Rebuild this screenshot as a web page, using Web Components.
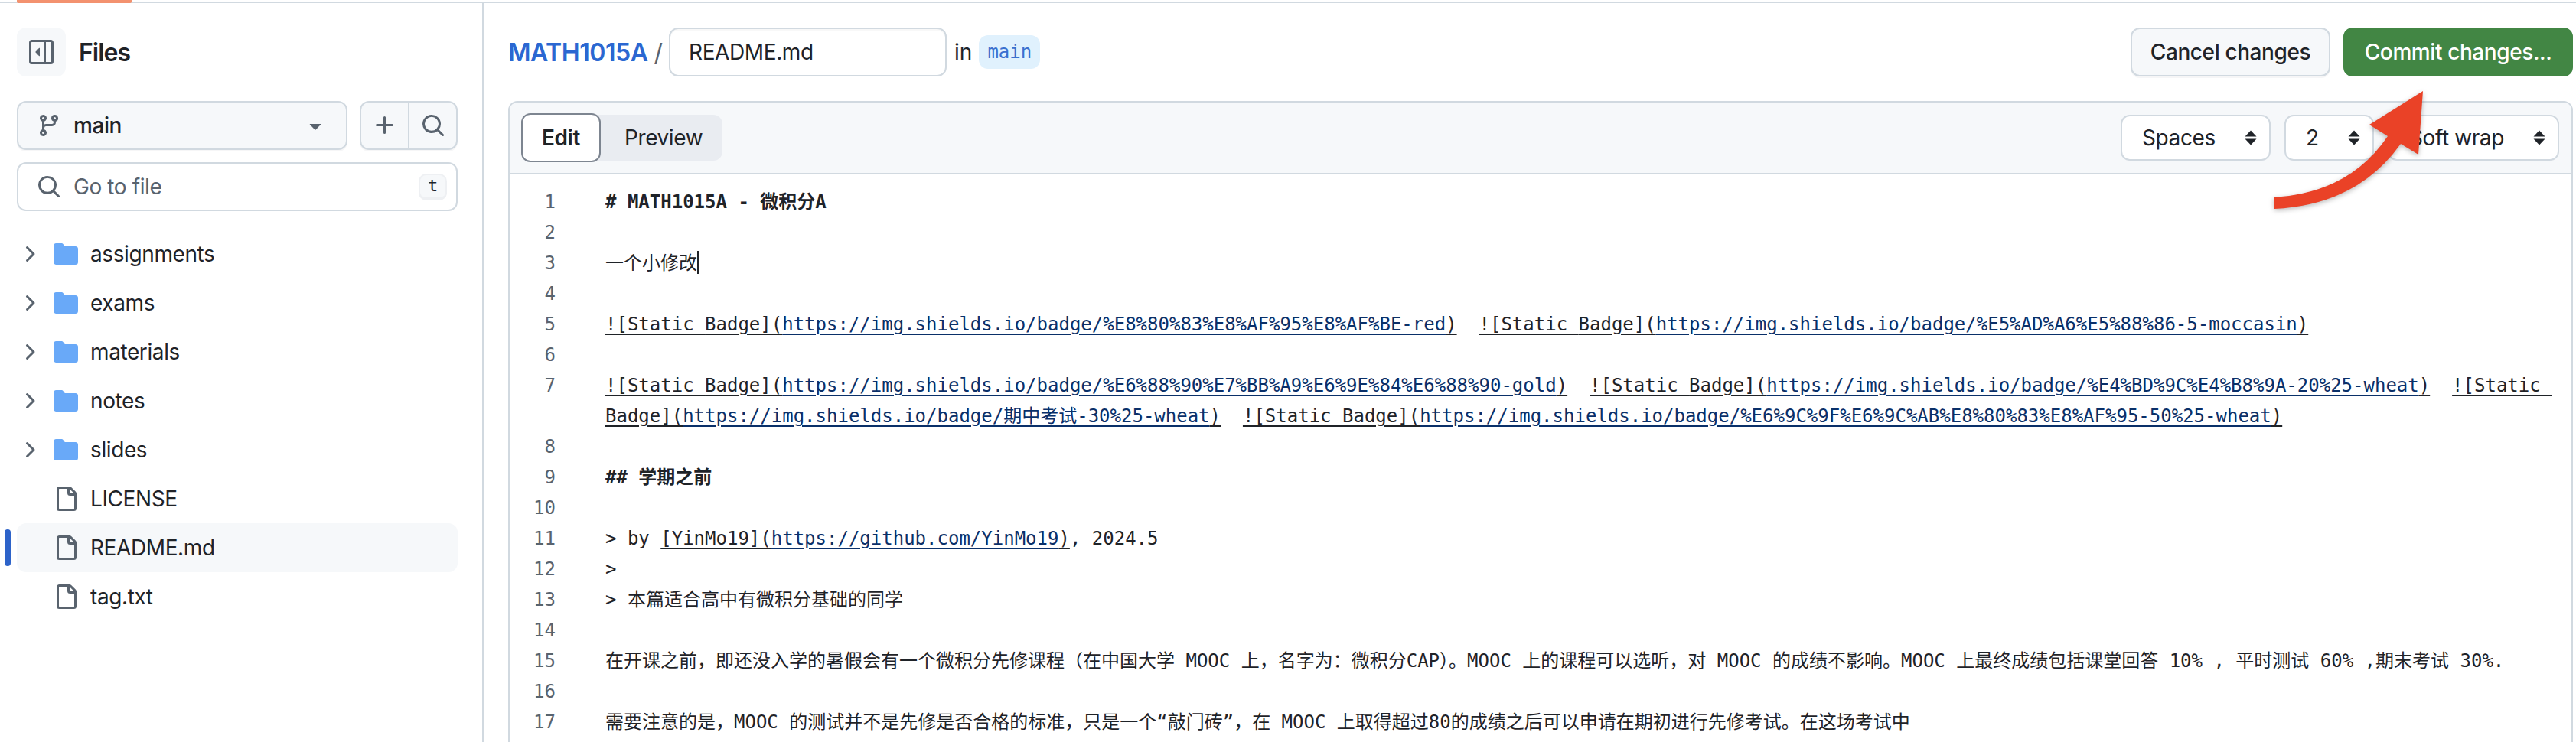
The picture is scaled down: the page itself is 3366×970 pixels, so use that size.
<!DOCTYPE html>
<html lang="en">
<head>
<meta charset="utf-8">
<title>Editing MATH1015A/README.md</title>
<style>
  html, body { margin: 0; padding: 0; background: #fff; }
  body {
    width: 3366px; height: 970px; overflow: hidden;
    font-family: Inter, "Noto Sans", "Noto Sans CJK SC", sans-serif;
    color: #1f2328;
  }
</style>
</head>
<body>
<app-shell>
  <file-sidebar slot="side">
    <tree-item kind="dir">assignments</tree-item>
    <tree-item kind="dir">exams</tree-item>
    <tree-item kind="dir">materials</tree-item>
    <tree-item kind="dir">notes</tree-item>
    <tree-item kind="dir">slides</tree-item>
    <tree-item>LICENSE</tree-item>
    <tree-item current>README.md</tree-item>
    <tree-item>tag.txt</tree-item>
  </file-sidebar>
  <edit-header slot="main"></edit-header>
  <code-editor slot="main">
    <code-line n="1" bold># MATH1015A - 微积分A</code-line>
    <code-line n="2"></code-line>
    <code-line n="3">一个小修改<edit-caret></edit-caret></code-line>
    <code-line n="4"></code-line>
    <code-line n="5"><md-link bang label="Static Badge" url="https://img.shields.io/badge/%E8%80%83%E8%AF%95%E8%AF%BE-red"></md-link>  <md-link bang label="Static Badge" url="https://img.shields.io/badge/%E5%AD%A6%E5%88%86-5-moccasin"></md-link></code-line>
    <code-line n="6"></code-line>
    <code-line n="7"><md-link bang label="Static Badge" url="https://img.shields.io/badge/%E6%88%90%E7%BB%A9%E6%9E%84%E6%88%90-gold"></md-link>  <md-link bang label="Static Badge" url="https://img.shields.io/badge/%E4%BD%9C%E4%B8%9A-20%25-wheat"></md-link>  <md-link bang label="Static Badge" url="https://img.shields.io/badge/期中考试-30%25-wheat"></md-link>  <md-link bang label="Static Badge" url="https://img.shields.io/badge/%E6%9C%9F%E6%9C%AB%E8%80%83%E8%AF%95-50%25-wheat"></md-link></code-line>
    <code-line n="8"></code-line>
    <code-line n="9" bold>## 学期之前</code-line>
    <code-line n="10"></code-line>
    <code-line n="11">&gt; by <md-link label="YinMo19" url="https://github.com/YinMo19"></md-link>, 2024.5</code-line>
    <code-line n="12">&gt;</code-line>
    <code-line n="13">&gt; 本篇适合高中有微积分基础的同学</code-line>
    <code-line n="14"></code-line>
    <code-line n="15">在开课之前，即还没入学的暑假会有一个微积分先修课程（在中国大学 MOOC 上，名字为：微积分CAP）。MOOC 上的课程可以选听，对 MOOC 的成绩不影响。MOOC 上最终成绩包括课堂回答 10% , 平时测试 60% ,期末考试 30%.</code-line>
    <code-line n="16"></code-line>
    <code-line n="17">需要注意的是，MOOC 的测试并不是先修是否合格的标准，只是一个“敲门砖”，在 MOOC 上取得超过80的成绩之后可以申请在期初进行先修考试。在这场考试中</code-line>
  </code-editor>
</app-shell>
<red-arrow></red-arrow>

<script>
const ICONS = {
  sidebar: '<path d="M4.177 7.823a.25.25 0 0 0 0 .354l2.396 2.396A.25.25 0 0 0 7 10.396V5.604a.25.25 0 0 0-.427-.177Z"/><path d="M1.75 0h12.5C15.216 0 16 .784 16 1.75v12.5A1.75 1.75 0 0 1 14.25 16H1.75A1.75 1.75 0 0 1 0 14.25V1.75C0 .784.784 0 1.75 0ZM1.5 1.75v12.5c0 .138.112.25.25.25H9.5v-13H1.75a.25.25 0 0 0-.25.25ZM11 14.5h3.25a.25.25 0 0 0 .25-.25V1.75a.25.25 0 0 0-.25-.25H11Z"/>',
  branch: '<path d="M9.5 3.25a2.25 2.25 0 1 1 3 2.122V6A2.5 2.5 0 0 1 10 8.5H6a1 1 0 0 0-1 1v1.128a2.251 2.251 0 1 1-1.5 0V5.372a2.25 2.25 0 1 1 1.5 0v1.836A2.493 2.493 0 0 1 6 7h4a1 1 0 0 0 1-1v-.628A2.25 2.25 0 0 1 9.5 3.25Zm-6 0a.75.75 0 1 0 1.5 0 .75.75 0 0 0-1.5 0Zm8.25-.75a.75.75 0 1 0 0 1.5.75.75 0 0 0 0-1.5ZM4.25 12a.75.75 0 1 0 0 1.5.75.75 0 0 0 0-1.5Z"/>',
  plus: '<path d="M7.75 2a.75.75 0 0 1 .75.75V7h4.25a.75.75 0 0 1 0 1.5H8.5v4.25a.75.75 0 0 1-1.5 0V8.5H2.75a.75.75 0 0 1 0-1.5H7V2.75A.75.75 0 0 1 7.75 2Z"/>',
  search: '<path d="M10.68 11.74a6 6 0 0 1-7.922-8.982 6 6 0 0 1 8.982 7.922l3.04 3.04a.749.749 0 0 1-.326 1.275.749.749 0 0 1-.734-.215ZM11.5 7a4.499 4.499 0 1 0-8.997 0A4.499 4.499 0 0 0 11.5 7Z"/>',
  chevron: '<path d="M6.22 3.22a.75.75 0 0 1 1.06 0l4.25 4.25a.75.75 0 0 1 0 1.06l-4.25 4.25a.751.751 0 0 1-1.042-.018.751.751 0 0 1-.018-1.042L9.94 8 6.22 4.28a.75.75 0 0 1 0-1.06Z"/>',
  folder: '<path d="M1.75 1A1.75 1.75 0 0 0 0 2.75v10.5C0 14.216.784 15 1.75 15h12.5A1.75 1.75 0 0 0 16 13.25v-8.5A1.75 1.75 0 0 0 14.25 3H7.5a.25.25 0 0 1-.2-.1l-.9-1.2C6.07 1.26 5.55 1 5 1H1.75Z"/>',
  file: '<path d="M2 1.75C2 .784 2.784 0 3.75 0h6.586c.464 0 .909.184 1.237.513l2.914 2.914c.329.328.513.773.513 1.237v9.586A1.75 1.75 0 0 1 13.25 16h-9.5A1.75 1.75 0 0 1 2 14.25Zm1.75-.25a.25.25 0 0 0-.25.25v12.5c0 .138.112.25.25.25h9.5a.25.25 0 0 0 .25-.25V6h-2.75A1.75 1.75 0 0 1 9 4.25V1.5Zm6.75.062V4.25c0 .138.112.25.25.25h2.688l-.011-.013-2.914-2.914-.013-.011Z"/>',
  caret: '<path d="m4.427 7.427 3.396 3.396a.25.25 0 0 0 .354 0l3.396-3.396A.25.25 0 0 0 11.396 7H4.604a.25.25 0 0 0-.177.427Z"/>'
};

function icon(name, size, color) {
  return `<svg width="${size}" height="${size}" viewBox="0 0 16 16" fill="${color}" style="display:block;flex:none">${ICONS[name]}</svg>`;
}

const MONO = '"DejaVu Sans Mono", "Noto Sans CJK SC", monospace';

class AppShell extends HTMLElement {
  constructor() {
    super();
    this.attachShadow({ mode: 'open' });
    this.shadowRoot.innerHTML = `
      <style>
        :host { display: block; width: 3366px; height: 970px; overflow: hidden; }
        .top { position: relative; height: 2px; padding-top: 2px; }
        .top::before { content: ""; display: block; height: 2px; background: #d1d9e0; }
        .tab { position: absolute; left: 22px; top: 0; width: 150px; height: 4px; background: #f3926f; border-radius: 0 0 2px 2px; }
        .cols { display: flex; height: 966px; }
        .side { flex: none; width: 630px; border-right: 2px solid #d1d9e0; }
        .main { flex: 1; min-width: 0; padding: 32px 4px 0 32px; }
      </style>
      <div class="top"><div class="tab"></div></div>
      <div class="cols">
        <div class="side"><slot name="side"></slot></div>
        <div class="main"><slot name="main"></slot></div>
      </div>
    `;
  }
}

class FileSidebar extends HTMLElement {
  constructor() {
    super();
    this.attachShadow({ mode: 'open' });
    this.shadowRoot.innerHTML = `
      <style>
        :host { display: block; padding: 32px 32px 0 22px; font-size: 28px; }
        .head { display: flex; align-items: center; gap: 17px; height: 64px; }
        .toggle { width: 64px; height: 64px; border-radius: 12px; background: #f6f8fa; display: flex; align-items: center; justify-content: center; }
        .title { font-size: 32px; font-weight: 600; letter-spacing: -1px; }
        .row { display: flex; gap: 16px; margin-top: 32px; }
        .btn { box-sizing: border-box; height: 64px; background: #f6f8fa; border: 2px solid #d1d9e0; border-radius: 12px; box-shadow: 0 2px 0 rgba(31,35,40,.04); display: flex; align-items: center; }
        .branch { flex: 1; padding: 0 24px; gap: 16px; font-weight: 500; letter-spacing: -0.4px; }
        .branch span { flex: 1; }
        .pair { width: 128px; flex: none; }
        .pair div { flex: 1; height: 100%; display: flex; align-items: center; justify-content: center; }
        .pair div + div { border-left: 2px solid #d1d9e0; }
        .find { box-sizing: border-box; height: 64px; margin-top: 16px; border: 2px solid #d1d9e0; border-radius: 12px; display: flex; align-items: center; padding: 0 12px 0 24px; gap: 16px; color: #59636e; letter-spacing: -0.4px; }
        .find span { flex: 1; }
        kbd { box-sizing: border-box; width: 37px; height: 35px; border-radius: 10px; background: #f6f8fa; border: 2px solid #eef0f3; border-bottom-width: 4px; color: #1f2328; font: 22px/27px ${MONO}; text-align: center; letter-spacing: 0; }
        .tree { margin-top: 24px; }
      </style>
      <div class="head">
        <div class="toggle">${icon('sidebar', 32, '#59636e')}</div>
        <div class="title">Files</div>
      </div>
      <div class="row">
        <div class="btn branch">${icon('branch', 32, '#59636e')}<span>main</span>${icon('caret', 32, '#59636e')}</div>
        <div class="btn pair"><div>${icon('plus', 32, '#59636e')}</div><div>${icon('search', 32, '#59636e')}</div></div>
      </div>
      <div class="find">${icon('search', 32, '#59636e')}<span>Go to file</span><kbd>t</kbd></div>
      <div class="tree"><slot></slot></div>
    `;
  }
}

class TreeItem extends HTMLElement {
  constructor() {
    super();
    this.attachShadow({ mode: 'open' });
    const dir = this.getAttribute('kind') === 'dir';
    const current = this.hasAttribute('current');
    this.shadowRoot.innerHTML = `
      <style>
        :host { display: block; position: relative; height: 64px; font-size: 28px; letter-spacing: -0.4px; }
        .row { height: 64px; display: flex; align-items: center; gap: 16px; border-radius: 12px; ${current ? 'background: #f6f8fa;' : ''} }
        .spacer { width: 32px; flex: none; }
        .bar { position: absolute; left: -16px; top: 8px; width: 8px; height: 48px; border-radius: 4px; background: #2d63c9; }
      </style>
      ${current ? '<div class="bar"></div>' : ''}
      <div class="row">
        ${dir ? icon('chevron', 32, '#59636e') : '<div class="spacer"></div>'}
        ${dir ? icon('folder', 32, '#69a9f8') : icon('file', 32, '#59636e')}
        <span><slot></slot></span>
      </div>
    `;
  }
}

class EditHeader extends HTMLElement {
  constructor() {
    super();
    this.attachShadow({ mode: 'open' });
    this.shadowRoot.innerHTML = `
      <style>
        :host { display: flex; align-items: center; height: 64px; font-size: 28px; }
        .repo { color: #2b67d1; font-size: 32px; font-weight: 600; letter-spacing: -0.45px; }
        .sep { color: #59636e; font-size: 32px; margin: 0 8px; }
        .name { box-sizing: border-box; width: 363px; height: 64px; border: 2px solid #d1d9e0; border-radius: 12px; box-shadow: inset 0 2px 0 rgba(31,35,40,.03); display: flex; align-items: center; padding-left: 24px; letter-spacing: -0.4px; }
        .in { margin: 0 9px 0 10px; }
        .ref { height: 44px; padding: 0 11px; border-radius: 12px; background: #e0f1fd; color: #3a70cf; font: 24px/44px ${MONO}; }
        .actions { margin-left: auto; display: flex; gap: 17px; }
        button { box-sizing: border-box; height: 64px; border-radius: 12px; font: 500 28px Inter, sans-serif; letter-spacing: -0.4px; padding: 0; }
        .cancel { width: 261px; background: #f6f8fa; border: 2px solid #d1d9e0; color: #1f2328; box-shadow: 0 2px 0 rgba(31,35,40,.04); }
        .commit { width: 300px; background: #428644; border: 2px solid #428644; color: #fff; }
      </style>
      <span class="repo">MATH1015A</span>
      <span class="sep">/</span>
      <div class="name">README.md</div>
      <span class="in">in</span>
      <span class="ref">main</span>
      <div class="actions">
        <button class="cancel">Cancel changes</button>
        <button class="commit">Commit changes...</button>
      </div>
    `;
  }
}

class EditorSelect extends HTMLElement {
  constructor() {
    super();
    this.attachShadow({ mode: 'open' });
    this.shadowRoot.innerHTML = `
      <style>
        :host { box-sizing: border-box; display: flex; align-items: center; height: 60px; background: #fff; border: 2px solid #d1d9e0; border-radius: 12px; padding: 0 16px 0 26px; font-size: 28px; letter-spacing: -0.4px; }
        span { flex: 1; }
        svg { display: block; flex: none; }
      </style>
      <span><slot></slot></span>
      <svg width="16" height="20" viewBox="0 0 16 20" fill="#1f2328"><path d="M8 0.5 15.5 8.5H.5Z"/><path d="M8 19.5 .5 11.5H15.5Z"/></svg>
    `;
  }
}

class CodeEditor extends HTMLElement {
  constructor() {
    super();
    this.attachShadow({ mode: 'open' });
    this.shadowRoot.innerHTML = `
      <style>
        :host { display: block; box-sizing: border-box; margin-top: 32px; height: 900px; border: 2px solid #d1d9e0; border-radius: 12px; overflow: hidden; font-size: 28px; }
        .bar { box-sizing: border-box; height: 94px; padding: 14px 16px 0 15px; background: #f6f8fa; border-bottom: 2px solid #d1d9e0; display: flex; align-items: flex-start; }
        .tabs { display: flex; width: 263px; height: 60px; margin-top: 2px; background: #e9ecf1; border-radius: 12px; }
        .edit { box-sizing: border-box; flex: none; width: 104px; height: 64px; margin-top: -2px; background: #fff; border: 2px solid #7d8590; border-radius: 12px; font-weight: 600; letter-spacing: -0.4px; display: flex; align-items: center; justify-content: center; }
        .prev { flex: 1; display: flex; align-items: center; padding-left: 31px; letter-spacing: -0.4px; }
        .opts { margin-left: auto; display: flex; gap: 18px; margin-top: 2px; }
        .lines { padding-top: 16px; }
      </style>
      <div class="bar">
        <div class="tabs"><div class="edit">Edit</div><div class="prev">Preview</div></div>
        <div class="opts">
          <editor-select style="width:196px">Spaces</editor-select>
          <editor-select style="width:117px">2</editor-select>
          <editor-select style="width:224px">Soft wrap</editor-select>
        </div>
      </div>
      <div class="lines"><slot></slot></div>
    `;
  }
}

class CodeLine extends HTMLElement {
  constructor() {
    super();
    this.attachShadow({ mode: 'open' });
    this.shadowRoot.innerHTML = `
      <style>
        :host { display: flex; font: 24px/40px ${MONO}; color: #1f2328; min-height: 40px; }
        :host([bold]) .text { font-weight: 700; }
        .num { flex: none; width: 60px; text-align: right; color: #59636e; font-weight: 400; }
        .text { flex: 1; min-width: 0; margin-left: 65px; padding-right: 24px; white-space: pre-wrap; }
      </style>
      <div class="num">${this.getAttribute('n')}</div>
      <div class="text"><slot></slot></div>
    `;
  }
}

// markdown link / image, underlined in two colours like the editor's syntax theme.
// no whitespace in this markup: white-space: pre-wrap is inherited from the code line
class MdLink extends HTMLElement {
  constructor() {
    super();
    this.attachShadow({ mode: 'open' });
    const bang = this.hasAttribute('bang') ? '!' : '';
    // one span per label word, so a soft wrap falls between two boxes
    const words = `${bang}[${this.getAttribute('label')}](`.split(/(?<= )/);
    this.shadowRoot.innerHTML = '<style>:host { display: inline; } span { text-decoration: underline; text-decoration-thickness: 2px; text-underline-offset: 4px; } .url { color: #0a3069; }</style>'
      + words.map(w => `<span>${w}</span>`).join('')
      + `<span class="url">${this.getAttribute('url')}</span><span>)</span>`;
  }
}

class EditCaret extends HTMLElement {
  constructor() {
    super();
    this.attachShadow({ mode: 'open' });
    this.shadowRoot.innerHTML = '<style>:host { display: inline-block; width: 2px; height: 30px; background: #1f2328; vertical-align: -6px; }</style>';
  }
}

class RedArrow extends HTMLElement {
  constructor() {
    super();
    this.attachShadow({ mode: 'open' });
    this.shadowRoot.innerHTML = `
      <style>
        :host { position: absolute; left: 2950px; top: 100px; width: 240px; height: 190px; pointer-events: none; }
        svg { display: block; overflow: visible; filter: drop-shadow(0 2px 3px rgba(0,0,0,.28)); }
      </style>
      <svg width="240" height="190" viewBox="2950 100 240 190">
        <path fill="#ea4227" d="M3166 119 3160 202 3137 188Q3080 268 2972 273L2971 258Q3070 252 3120 178L3096 163Z"/>
      </svg>
    `;
  }
}

window.customElements.define('app-shell', AppShell);
window.customElements.define('file-sidebar', FileSidebar);
window.customElements.define('tree-item', TreeItem);
window.customElements.define('edit-header', EditHeader);
window.customElements.define('editor-select', EditorSelect);
window.customElements.define('code-editor', CodeEditor);
window.customElements.define('code-line', CodeLine);
window.customElements.define('md-link', MdLink);
window.customElements.define('edit-caret', EditCaret);
window.customElements.define('red-arrow', RedArrow);
</script>
</body>
</html>
